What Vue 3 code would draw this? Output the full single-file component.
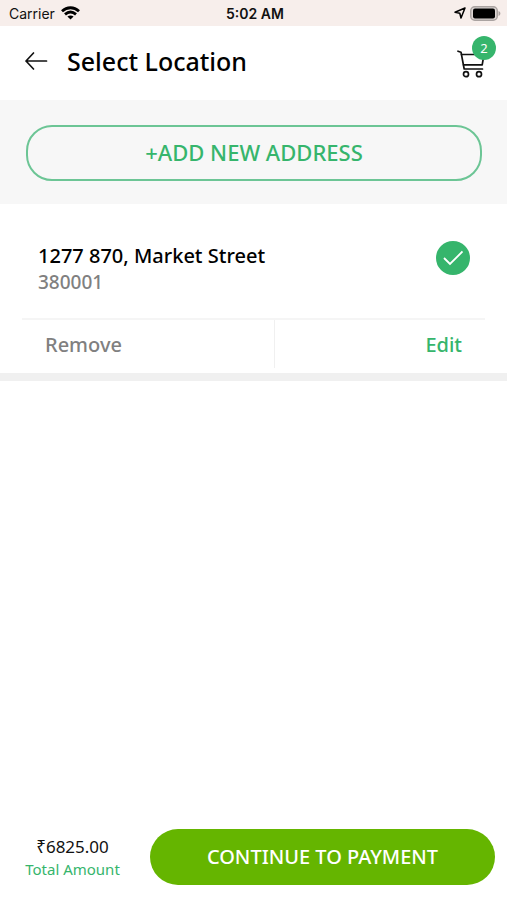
<template>
  <div class="page">
    <div class="status-bar">
      <div class="status-left">
        <span>Carrier</span>
        <svg width="19" height="14" viewBox="0 0 19 14" fill="none" stroke="#000" stroke-width="2.8">
          <path d="M1 5.2C6 .6 13 .6 18 5.2" />
          <path d="M4 8.4c3.400-3 7.600-3 11 0" />
          <path d="M9.500 13.600L6.400 10.500c1.800-1.500 4.400-1.500 6.200 0z" fill="#000" stroke="none" />
        </svg>
      </div>
      <span class="status-time">5:02 AM</span>
      <div class="status-right">
        <svg width="12" height="12" viewBox="0 0 12 12" fill="none" stroke="#000" stroke-width="1.5" stroke-linejoin="round">
          <path d="M11 1L1 5.300l4.800.9 1.200 4.800z" />
        </svg>
        <svg width="31" height="15" viewBox="0 0 31 15">
          <rect x=".75" y=".75" width="26.500" height="13.500" rx="4" fill="#ddd6d4" stroke="#aaa3a1" stroke-width="1.500" />
          <rect x="3" y="2.500" width="22" height="10" rx="2" fill="#000" />
          <path d="M28.500 5c2.500.8 2.500 4.200 0 5z" fill="#aaa3a1" />
        </svg>
      </div>
    </div>

    <header class="header">
      <button class="icon-btn" aria-label="Back">
        <svg width="24" height="20" viewBox="0 0 24 20" fill="none" stroke="#111" stroke-width="1.700" stroke-linecap="round" stroke-linejoin="round">
          <path d="M22.500 10H2M9.500 2L2 10l7.500 8" />
        </svg>
      </button>
      <h1>Select Location</h1>
      <button class="icon-btn cart-btn" aria-label="Cart">
        <svg width="28" height="28" viewBox="0 0 28 28" fill="none" stroke="#111" stroke-width="1.700" stroke-linecap="round" stroke-linejoin="round">
          <path d="M1 1.200l3 1 3.200 16.800h18.300" />
          <path d="M4.500 4.500h22.500l-1.800 10.300H6.500" />
          <circle cx="9" cy="24.200" r="2.500" />
          <circle cx="22" cy="24.200" r="2.500" />
        </svg>
        <span class="badge">{{ cartCount }}</span>
      </button>
    </header>

    <div class="add-section">
      <button class="add-btn">+ADD NEW ADDRESS</button>
    </div>

    <div class="address" v-for="address in addresses" :key="address.id">
      <label class="address-info">
        <span class="address-text">
          <span class="street">{{ address.street }}</span>
          <span class="zip">{{ address.zip }}</span>
        </span>
        <span class="address-check">
          <input type="radio" name="address" :value="address.id" v-model="selectedAddress">
          <svg v-if="selectedAddress === address.id" width="20" height="16" viewBox="0 0 20 16" fill="none" stroke="#fff" stroke-width="1.8">
            <path d="M1 8l6 6L19.500 1.500" />
          </svg>
        </span>
      </label>
      <div class="address-actions">
        <button class="remove-btn" @click="removeAddress(address.id)">Remove</button>
        <button class="edit-btn">Edit</button>
      </div>
    </div>

    <footer class="footer">
      <div class="total">
        <span class="total-price">₹{{ total }}</span>
        <span class="total-label">Total Amount</span>
      </div>
      <button class="pay-btn">CONTINUE TO PAYMENT</button>
    </footer>
  </div>
</template>

<script setup>
import { ref } from 'vue'

const cartCount = ref(2)
const total = ref('6825.00')
const selectedAddress = ref(1)

const addresses = ref([
  { id: 1, street: '1277 870, Market Street', zip: '380001' }
])

const removeAddress = (id) => {
  addresses.value = addresses.value.filter(address => address.id !== id)
}
</script>

<style>
body {
  margin: 0;
  background: #fff;
}
</style>

<style scoped>
.page {
  display: flex;
  flex-direction: column;
  min-height: 100vh;
  font-family: "Noto Sans", "Open Sans", sans-serif;
  color: #111;
}

button {
  padding: 0;
  border: none;
  background: none;
  font-family: inherit;
  cursor: pointer;
}

svg {
  display: block;
}

.status-bar {
  display: grid;
  grid-template-columns: 1fr auto 1fr;
  align-items: center;
  height: 26px;
  padding: 0 6px 0 9px;
  background: #f7eeeb;
  font-family: Inter, sans-serif;
  font-size: 14px;
}

.status-left,
.status-right {
  display: flex;
  align-items: center;
  gap: 6px;
}

.status-right {
  justify-content: flex-end;
  gap: 4px;
}

.status-time {
  font-weight: 600;
}

.header {
  display: flex;
  align-items: center;
  height: 74px;
  padding: 0 22px 0 24px;
}

.header h1 {
  flex: 1;
  margin: 0 0 4px 19px;
  font-size: 25px;
  line-height: 32px;
  font-weight: 500;
  color: #000;
}

.icon-btn {
  margin-bottom: 4px;
}

.cart-btn {
  position: relative;
  margin: 2px 0 0;
}

.badge {
  position: absolute;
  top: -14px;
  right: -11px;
  width: 24px;
  border-radius: 50%;
  background: #36b56c;
  color: #fff;
  font-size: 13px;
  line-height: 24px;
  text-align: center;
}

.add-section {
  padding: 25px 25px 23px 26px;
  background: #f7f7f7;
}

.add-btn {
  width: 100%;
  height: 56px;
  padding-bottom: 2px;
  border: 2px solid #6cc595;
  border-radius: 26px;
  color: #36b56c;
  font-size: 22px;
  font-weight: 500;
}

.address {
  border-bottom: 8px solid #f0f0f0;
}

.address-info {
  display: flex;
  justify-content: space-between;
  align-items: flex-start;
  margin: 0 22px;
  padding: 37px 15px 22px 16px;
  border-bottom: 2px solid #f5f5f5;
  cursor: pointer;
}

.address-text {
  display: flex;
  flex-direction: column;
  padding-top: 1px;
  font-size: 19px;
  line-height: 27px;
  font-weight: 500;
}

.street {
  color: #000;
  font-size: 20px;
}

.zip {
  color: #808080;
}

.address-check {
  display: grid;
  place-items: center;
}

.address-check > * {
  grid-area: 1 / 1;
}

.address-check input {
  appearance: none;
  width: 34px;
  height: 34px;
  margin: 0;
  border: 2px solid #36b56c;
  border-radius: 50%;
}

.address-check input:checked {
  background: #36b56c;
}

.address-check svg {
  pointer-events: none;
}

.address-actions {
  display: flex;
  margin: 0 22px;
  padding-bottom: 5px;
}

.address-actions button {
  flex: 1;
  height: 48px;
  padding: 0 23px;
  font-size: 20px;
  font-weight: 500;
}

.address-actions .remove-btn {
  flex: 1.25;
  border-right: 1px solid #f0f0f0;
  color: #808080;
  text-align: left;
}

.address-actions .edit-btn {
  color: #36b56c;
  text-align: right;
}

.footer {
  display: flex;
  align-items: center;
  margin-top: auto;
  padding: 0 12px 15px 0;
}

.total {
  display: flex;
  flex-direction: column;
  align-items: center;
  width: 150px;
  padding-right: 5px;
  box-sizing: border-box;
}

.total-price {
  font-size: 17px;
  line-height: 24px;
}

.total-label {
  color: #36b56c;
  font-size: 15px;
  line-height: 20px;
}

.pay-btn {
  flex: 1;
  height: 56px;
  padding-bottom: 2px;
  border-radius: 28px;
  background: #65b500;
  color: #fff;
  font-size: 20px;
  font-weight: 500;
}
</style>
